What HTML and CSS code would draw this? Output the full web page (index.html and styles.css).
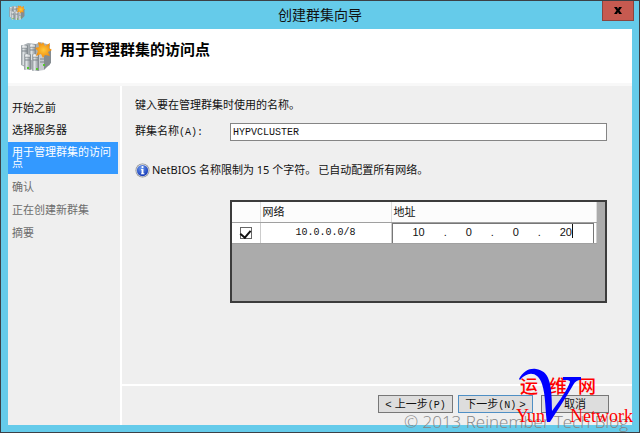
FILE: index.html
```html
<!DOCTYPE html>
<html lang="zh-CN">
<head>
<meta charset="utf-8">
<title>创建群集向导</title>
<link rel="stylesheet" href="styles.css">
</head>
<body>
<svg class="defs" aria-hidden="true">
  <defs>
    <linearGradient id="metal" x1="0" x2="1"><stop offset="0" stop-color="#8d9499"/><stop offset=".35" stop-color="#dfe3e5"/><stop offset="1" stop-color="#7b8287"/></linearGradient>
    <radialGradient id="sun"><stop offset="0" stop-color="#ffc93c"/><stop offset="1" stop-color="#f08a0c"/></radialGradient>
    <radialGradient id="blue" cx=".4" cy=".3" r=".8"><stop offset="0" stop-color="#6d9cf0"/><stop offset="1" stop-color="#0a2cae"/></radialGradient>
    <symbol id="cluster" viewBox="0 0 32 30">
      <path d="M1 4l7-3 8 1 4-2 10 3v20l-12 6-9-2-8-4z" fill="#a9afb3"/>
      <path d="M18 9l6 3v16l-6 1z" fill="#c7cccf"/><path d="M24 12l7-5v14l-7 7z" fill="#858c91"/>
      <rect x="1" y="3" width="7" height="20" rx="1" fill="url(#metal)"/>
      <rect x="9" y="2" width="7" height="16" rx="1" fill="url(#metal)"/>
      <rect x="4" y="12" width="7" height="16" rx="1" fill="url(#metal)"/>
      <rect x="12" y="12" width="7" height="17" rx="1" fill="url(#metal)"/>
      <path d="M2 6h5M2 9h5M10 5h5M10 8h5M5 15h5M5 18h5M13 15h5M13 18h5M20 17h4M20 20h4" stroke="#7c848a"/>
      <path d="M2 5h5M10 4h5M5 14h5M13 14h5" stroke="#fff"/>
      <path d="M7 26h2M16 27h2M23 23h2" stroke="#54c72c" stroke-width="2"/>
      <path d="M23 0l2 4 5-3-1 5 3 2-4 2 2 4-5-1-2 3-2-4-5 2 2-5-3-3 4-1-1-5 4 2z" fill="url(#sun)"/>
    </symbol>
  </defs>
</svg>
<div class="window">
  <header class="titlebar">
    <svg class="titlebar-icon" aria-hidden="true"><use href="#cluster"/></svg>
    <span class="titlebar-text">创建群集向导</span>
    <button class="close" type="button" aria-label="关闭">
      <svg viewBox="0 0 8 7" aria-hidden="true"><path d="M0 0h3l1 2 1-2h3L5.500 3.500 8 7H5L4 5 3 7H0l2.500-3.500z"/></svg>
    </button>
  </header>
  <div class="client">
    <div class="banner">
      <svg class="banner-icon" aria-hidden="true"><use href="#cluster"/></svg>
      <h1>用于管理群集的访问点</h1>
    </div>
    <div class="body">
      <nav class="steps">
        <ol>
          <li>开始之前</li>
          <li>选择服务器</li>
          <li class="current" aria-current="step">用于管理群集的访问点</li>
          <li class="pending">确认</li>
          <li class="pending">正在创建新群集</li>
          <li class="pending">摘要</li>
        </ol>
      </nav>
      <main class="page">
        <div class="form">
          <p>键入要在管理群集时使用的名称。</p>
          <div class="field">
            <label for="cluster-name">群集名称<span class="mono">(A):</span></label>
            <input id="cluster-name" type="text" value="HYPVCLUSTER">
          </div>
          <div class="note">
            <svg viewBox="0 0 16 16" aria-hidden="true"><circle cx="8" cy="8" r="7.500" fill="#8f9296"/><circle cx="8" cy="8" r="6.600" fill="#e4e7ec"/><circle cx="8" cy="8" r="6" fill="url(#blue)"/><circle cx="8" cy="4.300" r="1.200" fill="#fff"/><path d="M6.500 6.500H9V11h1v1H6.500v-1H7V7.500h-.5z" fill="#fff"/></svg>
            <p>NetBIOS 名称限制为 15 个字符。<span class="second">已自动配置所有网络。</span></p>
          </div>
          <div class="grid">
            <table>
              <thead><tr><th class="col-check"></th><th class="col-net">网络</th><th>地址</th></tr></thead>
              <tbody><tr>
                <td class="check"><input type="checkbox" checked aria-label="使用网络 10.0.0.0/8"></td>
                <td class="net">10.0.0.0/8</td>
                <td class="addr"><div class="ip"><span>10</span><i>.</i><span>0</span><i>.</i><span>0</span><i>.</i><span class="caret">20</span></div></td>
              </tr></tbody>
            </table>
          </div>
        </div>
        <footer class="actions">
          <button type="button">&lt; 上一步<span class="mono">(P)</span></button>
          <button type="button" class="default">下一步<span class="mono">(N)</span> &gt;</button>
          <button type="button" class="cancel">取消</button>
        </footer>
      </main>
    </div>
  </div>
  <div class="copyright">© 2013 Reinember Tech Blog</div>
  <div class="watermark">
    <div class="mark-top"><span>运</span><span>维</span><span>网</span></div>
    <div class="mark-bottom"><span>Yun</span><span>Network</span></div>
    <svg viewBox="0 0 64 56" aria-hidden="true"><path d="M1 11C5 3 12 0 18 1C31 3 34 14 34 43C43 31 50 20 52 14C52 12 49 12 45 12V9H63V12C58 12 57 14 54 19C47 31 39 43 32 54H29C27 44 28 28 24 16C20 3 9 3 2 12Z" fill="#00f"/></svg>
  </div>
</div>
</body>
</html>
```
FILE: styles.css
```css
* { box-sizing: border-box; }

body {
  margin: 0;
  color: #111;
  font: 11px/16px "Liberation Sans", "Noto Sans CJK SC", sans-serif;
}

h1, p, ol { margin: 0; padding: 0; }
button, input { font: inherit; color: inherit; }
.defs { position: absolute; width: 0; height: 0; }
.mono { font-family: "Liberation Mono", monospace; font-size: 10px; }

.window {
  position: relative;
  display: flex;
  flex-direction: column;
  min-height: 100vh;
  padding: 0 7px 7px;
  border: 1px solid #3c4046;
  background: #65cbea;
}

.titlebar {
  position: relative;
  display: flex;
  justify-content: center;
  height: 28px;
}
.titlebar-icon { position: absolute; left: 1px; top: 4px; width: 16px; height: 16px; }
.titlebar-text { font-size: 14px; line-height: 28px; }
.close {
  position: absolute;
  right: -2px;
  top: 0;
  display: grid;
  place-items: center;
  width: 32px;
  height: 20px;
  padding: 0;
  border: 1px solid #8a4540;
  border-top: 0;
  background: #c65a50;
}
.close svg { width: 8px; height: 7px; }

.client { flex: 1; display: flex; flex-direction: column; background: #efefef; }

.banner {
  display: flex;
  gap: 8px;
  height: 57px;
  padding: 13px 12px 0;
  border-bottom: 3px solid #f8f8f8;
  background: #fff;
}
.banner-icon { width: 32px; height: 30px; }
h1 { color: #000; font-size: 15px; line-height: 16px; }

.body { flex: 1; display: flex; }

.steps { width: 114px; padding-top: 11px; border-right: 2px solid #fff; }
.steps ol { list-style: none; }
.steps li { padding: 3px 4px; }
.steps .current { margin: 1px 2px 2px 0; padding: 5px 2px 5px 4px; background: #3399ff; color: #fff; line-height: 11px; }
.steps .pending { color: #6d6d6d; padding-bottom: 4px; }

.page { flex: 1; display: flex; flex-direction: column; min-width: 0; }
.form { flex: 1; padding: 11px 25px 0 13px; }

.field { display: flex; align-items: center; margin-top: 10px; }
.field label { width: 95px; }
.field input {
  flex: 1;
  min-width: 0;
  height: 18px;
  padding: 0 2px;
  border: 1px solid #858585;
  background: #fff;
  font: 10px/16px "Liberation Mono", monospace;
}

.note { display: flex; align-items: center; gap: 2px; margin-top: 21px; }
.note svg { width: 15px; height: 15px; }
.note p { font-family: "Noto Sans", "Noto Sans CJK SC", sans-serif; }
.second { margin-left: 2px; }

.grid {
  height: 103px;
  margin: 22px 0 0 95px;
  padding-right: 8px;
  border: 2px solid #3c3c3c;
  background: #ababab;
}
table { width: 100%; table-layout: fixed; border-collapse: collapse; }
th { height: 20px; padding: 0 2px; border-right: 1px solid #ddd; border-bottom: 1px solid #a0a0a0; background: #fcfcfc; font-weight: normal; text-align: left; }
td { height: 21px; padding: 0; border-right: 1px solid #ccc; border-bottom: 1px solid #a0a0a0; background: #fff; }
.col-check { width: 28px; }
.col-net { width: 131px; }
.check input {
  display: block;
  width: 12px;
  height: 12px;
  margin: 0 auto;
  border: 1px solid #666;
  appearance: none;
  background: #fff;
}
.check input::before {
  content: "";
  display: block;
  width: 5px;
  height: 8px;
  margin: 0 auto;
  border: solid #111;
  border-width: 0 2px 2px 0;
  transform: rotate(40deg);
}
.net { text-align: center; font: 10px/16px "Liberation Mono", monospace; }
.ip {
  display: flex;
  justify-content: space-between;
  height: 20px;
  margin-right: 2px;
  padding: 0 20px;
  border: 1px solid #777;
  border-bottom: 0;
  line-height: 16px;
}
.ip i { font-style: normal; }
.caret { height: 14px; border-right: 1px solid #111; }

.actions {
  display: flex;
  justify-content: flex-end;
  gap: 5px;
  height: 41px;
  padding: 9px 23px 0 0;
  border-top: 2px solid #fff;
}
.actions button {
  width: 75px;
  height: 18px;
  padding: 0;
  border: 1px solid #777;
  background: #ddd;
  line-height: 16px;
  white-space: nowrap;
}
.actions .default { border-color: #4f8fc4; }
.actions .cancel { width: 68px; margin-left: 3px; }

.copyright {
  position: absolute;
  right: 11px;
  bottom: -1px;
  color: #858585;
  font: 300 17px/22px "Open Sans", sans-serif;
}

.watermark { position: absolute; right: 6px; bottom: 6px; width: 117px; height: 58px; color: #f00; pointer-events: none; }
.watermark svg { position: absolute; left: 2px; top: 0; width: 64px; height: 56px; }
.mark-top { display: flex; gap: 11px; padding: 8px 0 0 4px; font: 500 18px/18px "Noto Sans CJK SC", sans-serif; }
.mark-bottom { display: flex; justify-content: space-between; margin-top: 13px; font: 18px/18px "Liberation Serif", serif; }
```
